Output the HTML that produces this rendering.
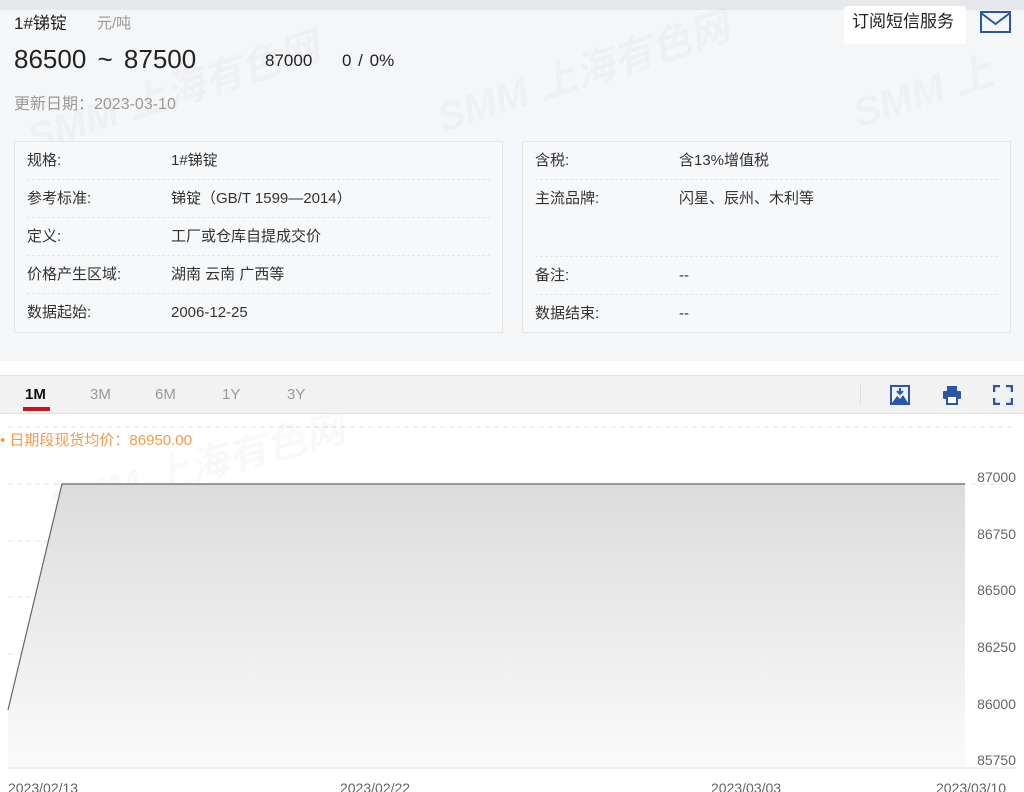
<!DOCTYPE html>
<html><head><meta charset="utf-8">
<style>
*{margin:0;padding:0;box-sizing:border-box}
body{width:1024px;height:792px;overflow:hidden;background:#fff;font-family:"Liberation Sans","Noto Sans CJK SC",sans-serif;position:relative;color:#333}
.top{position:absolute;left:0;top:0;width:1024px;height:361px;background:#f5f6f8}
.bar{position:absolute;left:0;top:0;width:1024px;height:10px;background:#e6e8eb}
.a{position:absolute;white-space:nowrap}
.box{position:absolute;top:141px;height:192px;border:1px solid #e6e6e6;background:#f7f8fa}
.row{position:absolute;left:12px;right:12px;height:38px;border-bottom:1px dashed #e6e6e6;font-size:15px;line-height:38px}
.row span{position:absolute}
.tabs{position:absolute;left:0;top:375px;width:1024px;height:39px;background:#f2f2f2;border-top:1px solid #e2e2e2;border-bottom:1px solid #e2e2e2}
.tab{position:absolute;top:10px;font-size:15px;color:#999}
.wm{position:absolute;font-size:40px;font-weight:bold;color:rgba(0,0,0,0.025);transform:rotate(-18deg);white-space:nowrap;font-style:italic}
</style></head><body>
<div class="top"></div>
<div class="bar"></div>
<div class="wm" style="left:20px;top:60px">SMM 上海有色网</div>
<div class="wm" style="left:430px;top:40px">SMM 上海有色网</div>
<div class="wm" style="left:850px;top:60px">SMM 上</div>
<div class="a" style="left:14px;top:9px;font-size:17px;color:#222">1#锑锭</div>
<div class="a" style="left:97px;top:12px;font-size:15px;color:#999">元/吨</div>
<div class="a" style="left:14px;top:44px;font-size:26px;color:#222;word-spacing:4px">86500 ~ 87500</div>
<div class="a" style="left:265px;top:51px;font-size:17px;color:#222">87000</div>
<div class="a" style="left:342px;top:51px;font-size:17px;color:#222;word-spacing:2px">0 / 0%</div>
<div class="a" style="left:14px;top:90px;font-size:16px;color:#999">更新日期：2023-03-10</div>
<div class="a" style="left:844px;top:6px;width:122px;height:38px;background:#fff;border-radius:3px;font-size:17px;line-height:32px;padding-left:8px;color:#222">订阅短信服务</div>
<svg class="a" style="left:980px;top:11px" width="31" height="22"><rect x="1" y="1" width="29" height="20" fill="none" stroke="#2b56a8" stroke-width="2"/><path d="M1 2 L15.5 13 L30 2" fill="none" stroke="#2b56a8" stroke-width="2"/></svg>

<div class="box" style="left:14px;width:489px">
<div class="row" style="top:0"><span style="left:0">规格:</span><span style="left:144px">1#锑锭</span></div>
<div class="row" style="top:38px"><span style="left:0">参考标准:</span><span style="left:144px">锑锭（GB/T 1599—2014）</span></div>
<div class="row" style="top:76px"><span style="left:0">定义:</span><span style="left:144px">工厂或仓库自提成交价</span></div>
<div class="row" style="top:114px"><span style="left:0">价格产生区域:</span><span style="left:144px">湖南 云南 广西等</span></div>
<div class="row" style="top:152px;border:none"><span style="left:0">数据起始:</span><span style="left:144px">2006-12-25</span></div>
</div>
<div class="box" style="left:522px;width:489px">
<div class="row" style="top:0"><span style="left:0">含税:</span><span style="left:144px">含13%增值税</span></div>
<div class="row" style="top:38px;height:77px"><span style="left:0">主流品牌:</span><span style="left:144px">闪星、辰州、木利等</span></div>
<div class="row" style="top:115px"><span style="left:0">备注:</span><span style="left:144px">--</span></div>
<div class="row" style="top:153px;border:none"><span style="left:0">数据结束:</span><span style="left:144px">--</span></div>
</div>

<div class="tabs">
<div class="tab" style="left:25px;color:#111;font-weight:bold">1M</div>
<div style="position:absolute;left:23px;top:31px;width:27px;height:4px;background:#c8161d"></div>
<div class="tab" style="left:90px">3M</div>
<div class="tab" style="left:155px">6M</div>
<div class="tab" style="left:222px">1Y</div>
<div class="tab" style="left:287px">3Y</div>
<div style="position:absolute;left:860px;top:9px;width:1px;height:20px;background:#ddd"></div>
<svg style="position:absolute;left:890px;top:9px" width="20" height="20"><rect x="1" y="1" width="18" height="18" fill="none" stroke="#2b56a8" stroke-width="2"/><path d="M2 18 L7 11 L10 14 L13 10 L18 18Z" fill="#2b56a8"/><path d="M10 3 V9 M7 6 L10 9 L13 6" stroke="#2b56a8" stroke-width="2" fill="none"/></svg>
<svg style="position:absolute;left:942px;top:9px" width="20" height="20"><rect x="5" y="1" width="10" height="5" fill="#2b56a8"/><rect x="1" y="6" width="18" height="8" rx="1" fill="#2b56a8"/><rect x="5" y="11" width="10" height="8" fill="#fff" stroke="#2b56a8" stroke-width="2"/></svg>
<svg style="position:absolute;left:993px;top:9px" width="20" height="20" fill="none" stroke="#2b56a8" stroke-width="2.5"><path d="M1 7V1H7M13 1H19V7M19 13V19H13M7 19H1V13"/></svg>
</div>

<svg class="a" style="left:0;top:414px" width="1024" height="378">
<defs><linearGradient id="g" x1="0" y1="0" x2="0" y2="1"><stop offset="0" stop-color="#dcdcdc"/><stop offset="1" stop-color="#fbfbfb"/></linearGradient></defs>
<g stroke="#e2e2e2" stroke-dasharray="5,4"><line x1="8" x2="1016" y1="13" y2="13"/><line x1="8" x2="1016" y1="70" y2="70"/><line x1="8" x2="965" y1="127" y2="127"/><line x1="8" x2="965" y1="183" y2="183"/><line x1="8" x2="965" y1="240" y2="240"/><line x1="8" x2="965" y1="297" y2="297"/></g>
<text x="50" y="40" font-size="40" font-weight="bold" font-style="italic" fill="rgba(0,0,0,0.025)" transform="rotate(-15 300 60)" font-family="Liberation Sans, Noto Sans CJK SC, sans-serif">SMM 上海有色网</text>
<path d="M8 296 L62 70 L965 70 L965 354 L8 354Z" fill="url(#g)"/>
<path d="M8 296 L62 70 L965 70" fill="none" stroke="#666" stroke-width="1.2"/>
<line x1="8" x2="1016" y1="354" y2="354" stroke="#e6e6e6"/>
<g font-size="14" fill="#666" text-anchor="end" font-family="Liberation Sans, sans-serif">
<text x="1016" y="68">87000</text><text x="1016" y="125">86750</text><text x="1016" y="181">86500</text><text x="1016" y="238">86250</text><text x="1016" y="295">86000</text><text x="1016" y="351">85750</text></g>
<g font-size="14" fill="#666" font-family="Liberation Sans, sans-serif"><text x="8" y="379">2023/02/13</text><text x="340" y="379">2023/02/22</text><text x="711" y="379">2023/03/03</text><text x="936" y="379">2023/03/10</text></g>
</svg>
<div class="a" style="left:0;top:429px;font-size:15px;color:#f59a4a">• 日期段现货均价：86950.00</div>
</body></html>
